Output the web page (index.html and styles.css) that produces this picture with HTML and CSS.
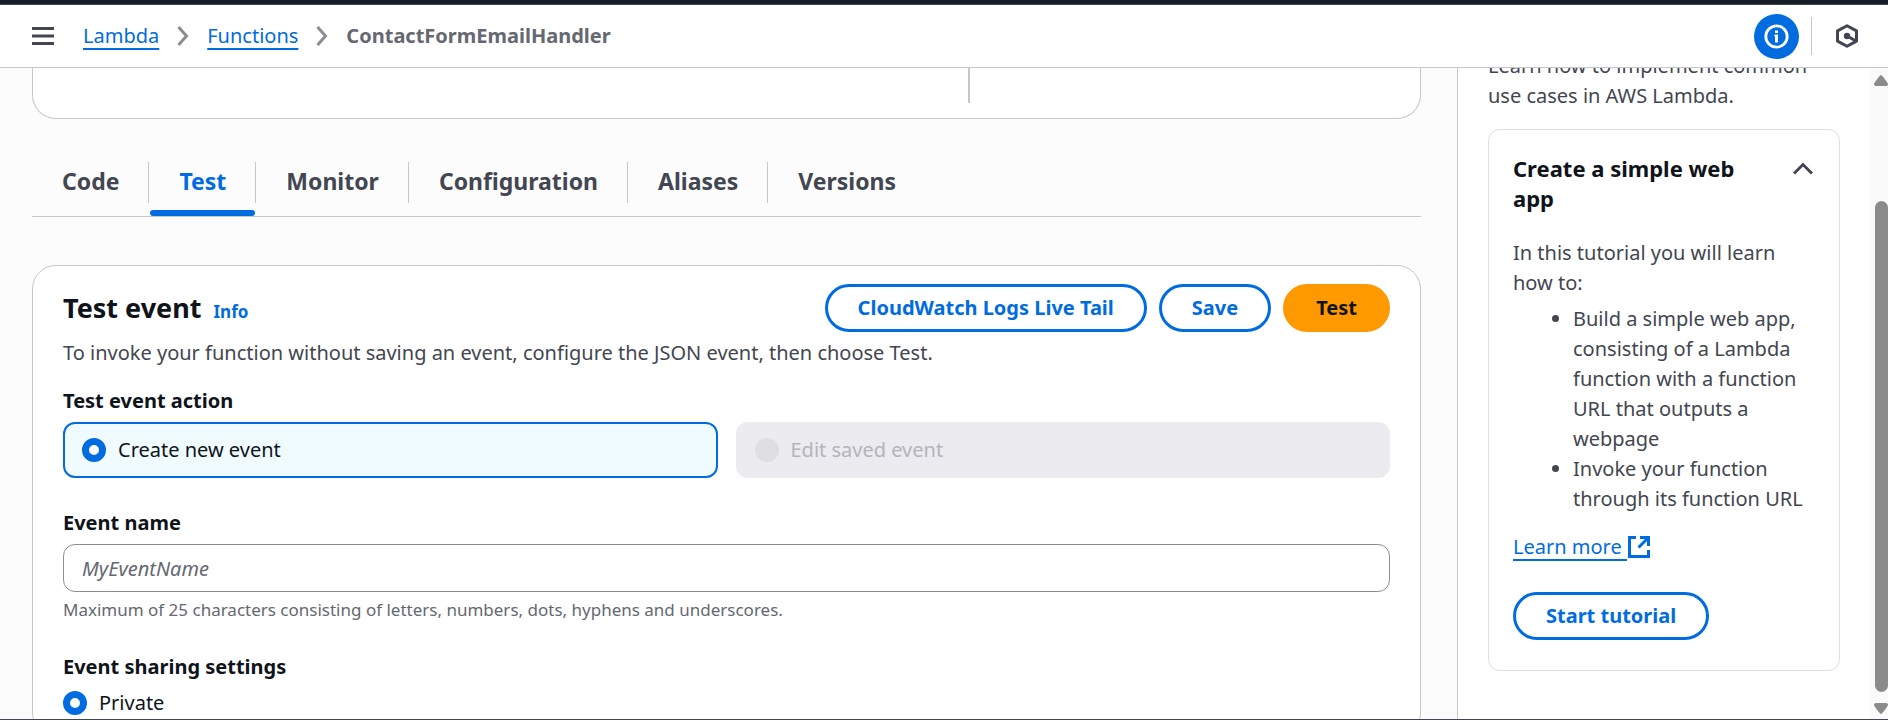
FILE: index.html
```html
<!DOCTYPE html>
<html lang="en">
<head>
<meta charset="utf-8">
<title>ContactFormEmailHandler | Functions | Lambda</title>
<link rel="stylesheet" href="styles.css">
</head>
<body>
<div class="top-strip"></div>
<header class="toolbar">
  <button class="icon-button" aria-label="Open navigation">
    <svg width="22" height="20" viewBox="0 0 22 20"><path d="M0 2.5h22M0 10h22M0 17.5h22" stroke="#424650" stroke-width="3"/></svg>
  </button>
  <nav class="breadcrumbs" aria-label="Breadcrumbs">
    <a class="crumb" href="#">Lambda</a>
    <svg class="crumb-sep" width="12" height="20" viewBox="0 0 12 20"><path d="M1.5 1l8 9-8 9" fill="none" stroke="#8c8c94" stroke-width="3"/></svg>
    <a class="crumb" href="#">Functions</a>
    <svg class="crumb-sep" width="12" height="20" viewBox="0 0 12 20"><path d="M1.5 1l8 9-8 9" fill="none" stroke="#8c8c94" stroke-width="3"/></svg>
    <span class="crumb-current">ContactFormEmailHandler</span>
  </nav>
  <div class="toolbar-tools">
    <button class="info-toggle" aria-label="Info panel">
      <svg width="25" height="25" viewBox="0 0 25 25"><circle cx="12.5" cy="12.5" r="10.7" fill="none" stroke="#fff" stroke-width="2.8"/><path d="M11 6.500h3v2.500h-3zM10.500 10.500H14v8h-3v-6h-.5z" fill="#fff"/></svg>
    </button>
    <span class="tool-divider"></span>
    <button class="icon-button" aria-label="Tutorials">
      <svg width="22" height="24" viewBox="0 0 22 24"><path d="M11 1.700l9.500 5.200v10.200L11 22.300l-9.500-5.200V6.900z" fill="none" stroke="#424650" stroke-width="3" stroke-linejoin="round"/><circle cx="11" cy="12" r="3.200" fill="#424650"/><path d="M11 12l9 5" stroke="#424650" stroke-width="3"/></svg>
    </button>
  </div>
</header>
<div class="layout">
  <main class="content">
    <section class="overview"><span class="overview-divider"></span></section>
    <div class="tabs" role="tablist">
      <button class="tab" role="tab">Code</button>
      <button class="tab tab-active" role="tab" aria-selected="true">Test</button>
      <button class="tab" role="tab">Monitor</button>
      <button class="tab" role="tab">Configuration</button>
      <button class="tab" role="tab">Aliases</button>
      <button class="tab" role="tab">Versions</button>
    </div>
    <section class="panel">
      <div class="panel-header">
        <h2 class="panel-title">Test event</h2>
        <a class="info-link" href="#">Info</a>
        <div class="actions">
          <button class="button">CloudWatch Logs Live Tail</button>
          <button class="button">Save</button>
          <button class="button button-primary">Test</button>
        </div>
      </div>
      <p class="description">To invoke your function without saving an event, configure the JSON event, then choose Test.</p>
      <fieldset class="field">
        <legend class="label">Test event action</legend>
        <div class="tiles">
          <label class="tile tile-selected"><input class="radio" type="radio" name="action" checked>Create new event</label>
          <label class="tile tile-disabled"><input class="radio" type="radio" name="action" disabled>Edit saved event</label>
        </div>
      </fieldset>
      <div class="field field-name">
        <label class="label" for="event-name">Event name</label>
        <input class="text-input" id="event-name" type="text" placeholder="MyEventName">
        <p class="hint">Maximum of 25 characters consisting of letters, numbers, dots, hyphens and underscores.</p>
      </div>
      <fieldset class="field field-sharing">
        <legend class="label">Event sharing settings</legend>
        <label class="radio-row"><input class="radio" type="radio" name="sharing" checked>Private</label>
      </fieldset>
    </section>
  </main>
  <aside class="side">
    <div class="side-body">
      <p class="side-intro">Learn how to implement common use cases in AWS Lambda.</p>
      <section class="card">
        <div class="card-header">
          <h3 class="card-title">Create a simple web app</h3>
          <button class="icon-button" aria-label="Collapse">
            <svg width="20" height="13" viewBox="0 0 20 13"><path d="M1 11.500l9-9 9 9" fill="none" stroke="#424650" stroke-width="3"/></svg>
          </button>
        </div>
        <p class="card-text">In this tutorial you will learn how to:</p>
        <ul class="card-list">
          <li>Build a simple web app, consisting of a Lambda function with a function URL that outputs a webpage</li>
          <li>Invoke your function through its function URL</li>
        </ul>
        <div class="card-link">
          <a class="learn-more" href="#">Learn more&nbsp;</a>
          <svg width="22" height="22" viewBox="0 0 22 22"><path d="M8 1.500H1.500v19h19V14M12 1.500h8.500V10M20 2L10.500 11.500" fill="none" stroke="#006ce0" stroke-width="3"/></svg>
        </div>
        <button class="button">Start tutorial</button>
      </section>
    </div>
    <div class="scrollbar" aria-hidden="true">
      <svg width="14" height="11" viewBox="0 0 14 11"><path d="M7 0c1 0 7 8 7 9s-.5 2-2 2H2c-1.500 0-2-1-2-2s6-9 7-9z" fill="#8b8b8b"/></svg>
      <div class="scroll-track"><div class="scroll-thumb"></div></div>
      <svg width="14" height="11" viewBox="0 0 14 11"><path d="M7 11c1 0 7-8 7-9s-.5-2-2-2H2C.5 0 0 1 0 2s6 9 7 9z" fill="#8b8b8b"/></svg>
    </div>
  </aside>
</div>
</body>
</html>
```

FILE: styles.css
```css
* { box-sizing: border-box; }

body {
  margin: 0;
  height: 100vh;
  display: flex;
  flex-direction: column;
  overflow: hidden;
  border-bottom: 1px solid #424650;
  background: #fcfcfd;
  color: #0f141a;
  font: 20px/30px "Noto Sans", "Open Sans", sans-serif;
}

h2, h3, p, ul, fieldset, legend { margin: 0; padding: 0; border: 0; }

button, input { font: inherit; }

svg { display: block; flex: none; }

.top-strip {
  flex: none;
  height: 5px;
  background: #161d26;
  border-bottom: 1px solid #424650;
}

.toolbar {
  flex: none;
  display: flex;
  align-items: center;
  height: 63px;
  padding: 0 30px 0 32px;
  background: #fff;
  border-bottom: 1px solid #c6c6cd;
}

.icon-button { padding: 0; border: 0; background: none; }

.breadcrumbs { display: flex; align-items: center; gap: 18px; margin-left: 29px; }

.crumb, .learn-more {
  color: #006ce0;
  text-decoration: underline;
  text-decoration-thickness: 2px;
  text-underline-offset: 5px;
}

.crumb-current { color: #656871; font-weight: 700; }

.toolbar-tools { display: flex; align-items: center; gap: 12px; margin-left: auto; }

.tool-divider { width: 1px; height: 38px; margin-right: 12px; background: #c6c6cd; }

.info-toggle {
  display: flex;
  align-items: center;
  justify-content: center;
  width: 45px;
  height: 45px;
  padding: 0;
  border: 0;
  border-radius: 50%;
  background: #006ce0;
}

.layout { flex: 1; min-height: 0; display: flex; }

.content { flex: 1; min-width: 0; overflow: hidden; padding: 0 36px 0 32px; }

.overview {
  display: flex;
  height: 51px;
  background: #fff;
  border: 1px solid #c6c6cd;
  border-top: 0;
  border-radius: 0 0 24px 24px;
}

.overview-divider { width: 2px; height: 35px; margin-left: 67.400%; background: #c6c6cd; }

.tabs {
  display: flex;
  margin: 43px 0 48px;
  border-bottom: 1px solid #c6c6cd;
}

.tab {
  position: relative;
  height: 54px;
  padding: 0 30px 16px;
  border: 0;
  background: none;
  color: #424650;
  font-size: 23px;
  font-weight: 700;
  line-height: 30px;
}

.tab:not(:last-child)::before {
  content: "";
  position: absolute;
  top: 0;
  right: 0;
  width: 1px;
  height: 41px;
  background: #c6c6cd;
}

.tab-active { color: #006ce0; }

.tab-active::after {
  content: "";
  position: absolute;
  left: 1px;
  right: 1px;
  bottom: 0;
  height: 6px;
  border-radius: 3px;
  background: #006ce0;
}

.panel {
  padding: 18px 30px;
  background: #fff;
  border: 1px solid #c6c6cd;
  border-radius: 24px;
}

.panel-header { display: flex; align-items: center; gap: 12px; }

.panel-title { font-size: 27px; line-height: 36px; }

.info-link {
  padding-top: 8px;
  color: #006ce0;
  font-size: 17px;
  font-weight: 700;
  text-decoration: none;
}

.actions { display: flex; gap: 12px; margin-left: auto; }

.button {
  height: 48px;
  padding: 0 30px;
  border: 3px solid #006ce0;
  border-radius: 24px;
  background: #fff;
  color: #006ce0;
  font-weight: 700;
}

.button-primary { background: #ff9900; border-color: #ff9900; color: #0f141a; }

.description { margin: 6px 0 18px; color: #424650; }

.label { display: block; margin-bottom: 6px; font-weight: 700; }

.tiles { display: grid; grid-template-columns: 1fr 1fr; gap: 18px; }

.tile {
  display: flex;
  align-items: center;
  gap: 12px;
  height: 56px;
  padding: 0 17px;
  border: 2px solid #ebebf0;
  border-radius: 12px;
}

.tile-selected { background: #f0fbff; border-color: #006ce0; }

.tile-disabled { background: #ebebf0; color: #b4b4bb; }

.radio {
  appearance: none;
  flex: none;
  width: 24px;
  height: 24px;
  margin: 0;
  border: 7px solid #006ce0;
  border-radius: 50%;
  background: #fff;
}

.radio:disabled { background: #dedee3; border-color: #dedee3; }

.field-name { margin: 30px 0; }

.text-input {
  display: block;
  width: 100%;
  height: 48px;
  padding: 0 18px;
  border: 1px solid #8c8c94;
  border-radius: 12px;
  background: #fff;
}

.text-input::placeholder { color: #656871; font-style: italic; opacity: 1; }

.hint { margin-top: 6px; color: #656871; font-size: 17px; line-height: 24px; }

.radio-row { display: flex; align-items: center; gap: 12px; }

.side {
  flex: none;
  display: flex;
  width: 431px;
  border-left: 1px solid #c6c6cd;
  background: #fff;
  color: #424650;
  overflow: hidden;
}

.side-body { flex: 1; margin-top: -17px; padding: 0 30px; }

.card {
  margin-top: 18px;
  padding: 23px 24px 30px;
  border: 1px solid #dedee3;
  border-radius: 12px;
}

.card-header { display: flex; align-items: flex-start; justify-content: space-between; }

.card-header .icon-button { padding: 9px 2px; }

.card-title { max-width: 240px; color: #0f141a; font-size: 22px; line-height: 30px; }

.card-text { margin-top: 25px; }

.card-list { margin-top: 6px; padding-left: 60px; }

.card-link { display: flex; align-items: center; gap: 1px; margin: 18px 0 30px; }

.scrollbar {
  flex: none;
  display: flex;
  flex-direction: column;
  align-items: flex-end;
  width: 18px;
  padding: 7px 0 5px;
  background: #fafafa;
}

.scroll-track { flex: 1; display: flex; flex-direction: column; justify-content: flex-end; padding: 0 0 11px; }

.scroll-thumb { width: 13px; height: 81%; border-radius: 7px; background: #8b8b8b; }
```
